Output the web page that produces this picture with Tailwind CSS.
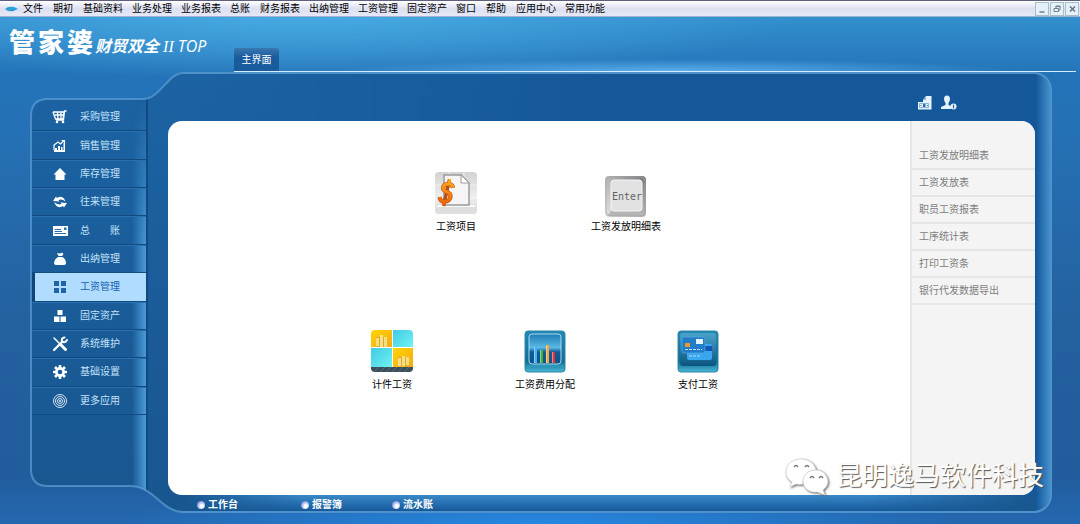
<!DOCTYPE html>
<html lang="zh-CN">

<head>
    <meta charset="UTF-8">
    <meta name="viewport" content="width=device-width, initial-scale=1.0">
    <title>管家婆财贸双全 II TOP</title>
    <script src="https://cdn.jsdelivr.net/npm/@tailwindcss/browser@4"></script>
</head>

<body class="min-h-screen flex flex-col relative font-['Liberation_Sans','Noto_Sans_CJK_SC',sans-serif] text-[10px] leading-4 bg-[radial-gradient(ellipse_420px_40px_at_50%_100%,#2688e2,transparent),radial-gradient(ellipse_500px_70px_at_28%_2%,#48abe4,transparent),linear-gradient(to_bottom,#3797d3_0px,#2d84c5_40px,#2473b8_75px,#2571b5_130px,#24619f_320px,#215c9c_90%,#2468b0_100%)]">

    <!-- menu bar -->
    <nav class="h-[17px] shrink-0 flex items-center border-t border-[#5d5f7c] border-b border-b-[#9fb5cf] bg-linear-to-b from-white via-[#dde0f1] to-[#e6e8f6] pl-[5px] text-black">
        <svg class="w-[13px] h-[6px] mr-[5px]" viewBox="0 0 13 6">
            <path d="M0 3Q3 0 9 1L13 3L8 5Q3 6 0 3Z" fill="#2a9fd8" />
            <path d="M3 4Q8 6 13 3L8 5Z" fill="#12568c" />
        </svg>
        <div class="flex gap-[9px] pt-px whitespace-nowrap">
            <button class="min-w-[21px] text-left">文件</button>
            <button class="min-w-[21px] text-left">期初</button>
            <button class="min-w-[21px] text-left">基础资料</button>
            <button class="min-w-[21px] text-left">业务处理</button>
            <button class="min-w-[21px] text-left">业务报表</button>
            <button class="min-w-[21px] text-left">总账</button>
            <button class="min-w-[21px] text-left">财务报表</button>
            <button class="min-w-[21px] text-left">出纳管理</button>
            <button class="min-w-[21px] text-left">工资管理</button>
            <button class="min-w-[21px] text-left">固定资产</button>
            <button class="min-w-[21px] text-left">窗口</button>
            <button class="min-w-[21px] text-left">帮助</button>
            <button class="min-w-[21px] text-left">应用中心</button>
            <button class="min-w-[21px] text-left">常用功能</button>
        </div>
        <div class="ml-auto flex gap-px pr-px">
            <button aria-label="最小化" class="w-[14px] h-[14px] border border-[#a9bdcb] bg-[#e4f1f8]">
                <svg class="w-3 h-3" viewBox="0 0 12 12" fill="none" stroke="#73808c" stroke-width="1.5"><path d="M3.500 9H8.500" /></svg>
            </button>
            <button aria-label="还原" class="w-[14px] h-[14px] border border-[#a9bdcb] bg-[#e4f1f8]">
                <svg class="w-3 h-3" viewBox="0 0 12 12" fill="none" stroke="#73808c"><path d="M5 5V3H9V7H8M4.500 3.500H9.500M3 5.500H7.500V8.500H3Z" /></svg>
            </button>
            <button aria-label="关闭" class="w-[14px] h-[14px] border border-[#a9bdcb] bg-[#e4f1f8]">
                <svg class="w-3 h-3" viewBox="0 0 12 12" fill="none" stroke="#687480" stroke-width="1.6"><path d="M4 3.5L9 8.5M9 3.5L4 8.5" /></svg>
            </button>
        </div>
    </nav>

    <!-- logo and page tab -->
    <header class="h-[55px] shrink-0 flex items-end pl-[9px] pr-1 text-white">
        <h1 class="flex items-baseline w-[225px] shrink-0 self-start pt-[10px] whitespace-nowrap leading-8">
            <span class="flex gap-[3px] text-[26px] font-black"><span>管</span><span>家</span><span>婆</span></span>
            <span class="text-[16px] font-bold italic ml-[2px]">财贸双全</span>
            <span class="text-[16px] italic ml-1 font-['Liberation_Serif',serif]">II</span>
            <span class="text-[16px] italic ml-1 font-['Open_Sans',sans-serif]">TOP</span>
        </h1>
        <div class="flex-1 self-stretch flex items-end border-b border-[#d5ecfb] bg-[radial-gradient(ellipse_340px_12px_at_52%_100%,#5aaeec,transparent)]">
            <button class="w-[45px] h-[23px] rounded-t-[2px] bg-linear-to-b from-[#3a78b1] to-[#195c9d] to-40%">主界面</button>
        </div>
    </header>

    <!-- framed work area -->
    <div class="relative flex-1 flex ml-[30px] mr-7 mb-[11px]">
        <svg class="absolute left-0 top-0 w-[153px] h-full" viewBox="0 0 153 441" preserveAspectRatio="none">
            <defs>
                <linearGradient id="panel" x1="0" y1="0" x2="0" y2="1">
                    <stop offset="0" stop-color="#1c63a3" />
                    <stop offset="1" stop-color="#18568f" />
                </linearGradient>
                <linearGradient id="glow">
                    <stop offset="0" stop-color="#4a9bd8" stop-opacity="0" />
                    <stop offset="1" stop-color="#4a9bd8" />
                </linearGradient>
                <linearGradient id="glowFade" x1="0" y1="0" x2="0" y2="1">
                    <stop offset="0" stop-color="#1b609f" />
                    <stop offset="1" stop-color="#1b609f" stop-opacity="0" />
                </linearGradient>
            </defs>
            <path d="M153 1C138 1 130 27 113 27H18Q1 27 1 44V397Q1 414 18 414H100C124 414 132 440 153 440Z" fill="url(#panel)" />
            <path d="M102 28H116V419Q110 415 102 414Z" fill="url(#glow)" />
            <path d="M102 28H116V180H102Z" fill="url(#glowFade)" />
            <path d="M117 27V419" stroke="#114a80" stroke-width="2" />
            <path d="M153 1C138 1 130 27 113 27H18Q1 27 1 44V397Q1 414 18 414H100C124 414 132 440 153 440" fill="none" stroke="#5a9bd2" stroke-opacity=".75" stroke-width="2" />
        </svg>
        <div class="absolute left-[153px] right-0 inset-y-0 rounded-r-[18px] border-2 border-l-0 border-[#4f92cb] bg-[linear-gradient(to_right,transparent_calc(100%_-_14px),#438fcb),linear-gradient(to_right,transparent,#14589a_50%),linear-gradient(to_bottom,#1c63a3,#18568f)]"></div>

        <aside class="relative w-[117px] shrink-0 pt-[31px] pl-[2px] pr-px">
            <ul class="grid h-[312px] auto-rows-fr text-[#c3e2fa]">
                <li class="border-b border-[#114b82]"><button class="w-full h-full flex items-center pl-[20px]">
                    <svg class="w-4 h-4 mr-3" viewBox="0 0 16 16" fill="none" stroke="#fff"><path d="M1 3H12L11 10H3.500L1 3M14.500 2H12.500L11.500 11H4M3 6H12M5.500 3L6 10M9 3V10" stroke-width="1.300" /><circle cx="5" cy="13" r="1.300" fill="#fff" stroke="none" /><circle cx="11" cy="13" r="1.300" fill="#fff" stroke="none" /></svg>采购管理</button></li>
                <li class="border-t border-t-[#2a6fae] border-b border-b-[#114b82]"><button class="w-full h-full flex items-center pl-[20px]">
                    <svg class="w-4 h-4 mr-3" viewBox="0 0 16 16" fill="#fff"><path d="M2 12H13V14H2ZM3 10H5V12H3ZM6 8H8V12H6ZM9 9H10.500V12H9ZM11.500 5H13V12H11.500Z" /><path d="M2 12V7L6 4L8.500 6L12 2.500M9.500 2.500H12.500V5" fill="none" stroke="#fff" stroke-width="1.200" /></svg>销售管理</button></li>
                <li class="border-t border-t-[#2a6fae] border-b border-b-[#114b82]"><button class="w-full h-full flex items-center pl-[20px]">
                    <svg class="w-4 h-4 mr-3" viewBox="0 0 16 16" fill="#fff"><path d="M8 2L14.500 8.500H12.500V14H3.500V8.500H1.500Z" /></svg>库存管理</button></li>
                <li class="border-t border-t-[#2a6fae] border-b border-b-[#114b82]"><button class="w-full h-full flex items-center pl-[20px]">
                    <svg class="w-4 h-4 mr-3" viewBox="0 0 16 16" fill="#fff"><path d="M1 7L4 2.500L5 4Q9 1.500 12 4.500L13.500 7.500Q10 4.500 6.500 6L7.500 7.500Z" /><path d="M15 9L12 13.500L11 12Q7 14.500 4 11.500L2 8Q6 11.500 9.500 10L8.500 8.500Z" /></svg>往来管理</button></li>
                <li class="border-t border-t-[#2a6fae] border-b border-b-[#114b82]"><button class="w-full h-full flex items-center pl-[20px]">
                    <svg class="w-4 h-4 mr-3" viewBox="0 0 16 16"><path d="M1 3H16V13H1Z" fill="#fff" /><path d="M2.500 6.500H9M2.500 8.500H10M2.500 10.500H14" stroke="#2e70aa" /><path d="M12 4.500H14.500V7H12Z" fill="#2e70aa" /></svg><span class="w-10 flex justify-between"><span>总</span><span>账</span></span></button></li>
                <li class="border-t border-t-[#2a6fae] border-b border-b-[#114b82]"><button class="w-full h-full flex items-center pl-[20px]">
                    <svg class="w-4 h-4 mr-3" viewBox="0 0 16 16" fill="#fff"><path d="M5 2Q8 3 10 1.500L11.500 3L10 5H6.500ZM6 6H10.500Q14 8 14 12Q14 14 12 14H4Q2 14 2 12Q2.500 8 6 6Z" /></svg>出纳管理</button></li>
                <li class="border-l-[3px] border-l-[#0e4479] border-b border-b-[#114b82]"><button aria-current="page" class="w-full h-full flex items-center pl-[17px] bg-[#b0dcff] text-[#1560ae]">
                    <svg class="w-4 h-4 mr-3" viewBox="0 0 16 16" fill="#1e64a6"><path d="M2 2H7V7H2ZM9 2H14V7H9ZM2 9H7V14H2ZM9 9H14V14H9Z" /></svg>工资管理</button></li>
                <li class="border-t border-t-[#2a6fae] border-b border-b-[#114b82]"><button class="w-full h-full flex items-center pl-[20px]">
                    <svg class="w-4 h-4 mr-3" viewBox="0 0 16 16" fill="#fff"><path d="M5.500 2H10.500V7H5.500ZM2 8.500H7.500V14H2ZM8.500 8.500H14V14H8.500Z" /></svg>固定资产</button></li>
                <li class="border-t border-t-[#2a6fae] border-b border-b-[#114b82]"><button class="w-full h-full flex items-center pl-[20px]">
                    <svg class="w-4 h-4 mr-3" viewBox="0 0 16 16" fill="none" stroke="#fff" stroke-linecap="round"><path d="M2 2L8 8" stroke-width="1.500" /><path d="M9 9L13.500 13.500" stroke-width="3" /><path d="M2 14L10.500 5.500" stroke-width="2.300" /><path d="M12.500 1.500Q9 2 10 5.500Q13 7.500 15 4" stroke-width="2" /></svg>系统维护</button></li>
                <li class="border-t border-t-[#2a6fae] border-b border-b-[#114b82]"><button class="w-full h-full flex items-center pl-[20px]">
                    <svg class="w-4 h-4 mr-3" viewBox="0 0 16 16" fill="none" stroke="#fff"><path d="M8 1V15M1 8H15M3 3L13 13M13 3L3 13" stroke-width="2.600" /><circle cx="8" cy="8" r="4.500" fill="#fff" /><circle cx="8" cy="8" r="2.300" fill="#1b5b99" stroke="none" /></svg>基础设置</button></li>
                <li class="border-t border-t-[#2a6fae] border-b border-b-[#114b82]"><button class="w-full h-full flex items-center pl-[20px]">
                    <svg class="w-4 h-4 mr-3" viewBox="0 0 16 16" fill="none" stroke="#d3e2ef"><circle cx="8" cy="8" r="6.500" /><circle cx="8" cy="8" r="4.500" /><circle cx="8" cy="8" r="2.500" /><circle cx="8" cy="8" r=".8" /></svg>更多应用</button></li>
            </ul>
        </aside>

        <main class="relative flex-1 flex flex-col pl-[21px] pr-[17px]">
            <div class="h-[49px] shrink-0 flex justify-end gap-[7px] pt-[22px] pr-[78px]">
                <button aria-label="凭证" class="w-4 h-[18px]">
                    <svg class="w-4 h-[18px]" viewBox="0 0 16 18"><path d="M6 6L9 2H14.500V8H6Z" fill="#e7f3fb" /><path d="M6 6H9V2Z" fill="#8cb6da" /><path d="M1 8H14.500V15.500H1Z" fill="#e7f3fb" /><path d="M2.500 9.500H11.500V13.500H2.500Z" fill="none" stroke="#6fa0cb" stroke-width=".8" /><path d="M6 10H8.500V13H6ZM3.500 11H4.500V12H3.500ZM10 11H11V12H10Z" fill="#2f70aa" /></svg>
                </button>
                <button aria-label="用户" class="w-[17px] h-[18px]">
                    <svg class="w-[17px] h-[18px]" viewBox="0 0 17 18" fill="#e7f3fb"><path d="M4 5Q4 1.500 7 1.500Q10 1.500 10 5Q10 7 8.500 9V11L11 12V15H1V13L5.500 11V9Q4 7 4 5Z" /><circle cx="13.500" cy="12.500" r="3" /><path d="M13.500 10.500V14.500" stroke="#2a69a5" stroke-width="1.200" /></svg>
                </button>
            </div>

            <div class="flex-1 flex rounded-[14px] bg-white overflow-hidden">
                <section class="flex-1 pt-[49px] text-black">
                    <div class="flex gap-[70px] pl-[238px]">
                        <button class="w-[100px] flex flex-col items-center gap-px">
                            <svg class="w-11 h-12" viewBox="0 0 44 48">
                                <defs>
                                    <linearGradient id="tile" x1="0" y1="0" x2="0" y2="1"><stop offset="0" stop-color="#d2d2d2" /><stop offset=".6" stop-color="#eee" /><stop offset="1" stop-color="#d9d9d9" /></linearGradient>
                                    <linearGradient id="orange" gradientUnits="userSpaceOnUse" x1="0" y1="8" x2="0" y2="36"><stop offset="0" stop-color="#ffb21c" /><stop offset="1" stop-color="#ee5c0c" /></linearGradient>
                                </defs>
                                <rect x="1" y="2" width="42" height="42" rx="4" fill="url(#tile)" />
                                <path d="M15 2V44M30 2V37M1 15H43M1 28H43" stroke="#fff" stroke-opacity=".6" />
                                <path d="M1 36L4 34H40L43 36V40Q43 44 39 44H5Q1 44 1 40Z" fill="#dedede" />
                                <path d="M4 35H40L42 37H2Z" fill="#fafafa" />
                                <path d="M10 5H27L35 13V35H10Z" fill="#f5f5f5" stroke="#9b9b9b" stroke-width="1.500" />
                                <path d="M27 5V13H35Z" fill="#fff" stroke="#9b9b9b" />
                                <g fill="none" stroke-linejoin="round">
                                    <path d="M19 18Q18.500 14 14.500 14Q9.500 14 9 17.500Q9 20.500 13 22Q17 23.500 16.500 27Q15.500 31.500 10.500 31.500Q6 31.500 5.500 27" stroke="#b9500f" stroke-width="4.200" />
                                    <path d="M15.500 9.500L9.500 36" stroke="#b9500f" stroke-width="3.400" />
                                    <path d="M19 18Q18.500 14 14.500 14Q9.500 14 9 17.500Q9 20.500 13 22Q17 23.500 16.500 27Q15.500 31.500 10.500 31.500Q6 31.500 5.500 27" stroke="url(#orange)" stroke-width="3" />
                                    <path d="M16 9L15 13.500M10.500 31L9 35.500" stroke="url(#orange)" stroke-width="2.600" />
                                </g>
                            </svg>
                            <span>工资项目</span>
                        </button>
                        <button class="w-[100px] flex flex-col items-center gap-px">
                            <svg class="w-11 h-12" viewBox="0 0 44 48">
                                <defs><linearGradient id="keycap" x1="0" y1="1" x2="1" y2="0"><stop offset="0" stop-color="#e3e3e3" /><stop offset=".5" stop-color="#b5b5b7" /><stop offset="1" stop-color="#77777c" /></linearGradient></defs>
                                <rect x="1" y="6" width="41" height="41" rx="4" fill="url(#keycap)" />
                                <path d="M4 45L9 39H36L41 45Q40 46 38 46H6Z" fill="#b4b4b6" />
                                <rect x="2" y="7" width="39" height="39" rx="4" fill="none" stroke="#a4a4a6" stroke-opacity=".7" />
                                <rect x="7" y="10" width="31" height="31" rx="3" fill="#e2e2e3" stroke="#f5f5f5" />
                                <text x="8" y="30" font-family="DejaVu Sans Mono, monospace" font-size="10" fill="#626262">Enter</text>
                            </svg>
                            <span>工资发放明细表</span>
                        </button>
                    </div>

                    <div class="flex gap-[53px] pl-[174px] pt-[93px]">
                        <button class="w-[100px] flex flex-col items-center gap-px">
                            <svg class="w-11 h-12" viewBox="0 0 44 48">
                                <defs>
                                    <linearGradient id="cyan" x1="0" y1="0" x2="1" y2="1"><stop offset="0" stop-color="#3fcbe2" /><stop offset="1" stop-color="#71f2f5" /></linearGradient>
                                    <linearGradient id="gold" x1="0" y1="0" x2="1" y2="1"><stop offset="0" stop-color="#ffd500" /><stop offset="1" stop-color="#f5a817" /></linearGradient>
                                </defs>
                                <path d="M1 36H43V40Q43 44 39 44H5Q1 44 1 40Z" fill="#3b4e5b" />
                                <path d="M4 44L9 39M10 44L15 39M16 44L21 39M22 44L27 39M28 44L33 39M34 44L39 39" stroke="#596d79" />
                                <path d="M1 6Q1 2 5 2H22V20H1Z" fill="url(#gold)" />
                                <path d="M23 2H39Q43 2 43 6V19H23Z" fill="url(#cyan)" />
                                <path d="M1 20H22V39H1Z" fill="url(#cyan)" />
                                <path d="M23 20H43V39H23Z" fill="url(#gold)" />
                                <path d="M22.500 2V39M1 19.500H43" stroke="#fff" />
                                <path d="M6 9H17V19H6ZM28 29H39V38H28Z" fill="#dca92c" />
                                <path d="M6 11H9M6 13H9M6 15H9M6 17H9M10 8H13M10 10H13M10 12H13M10 14H13M10 16H13M10 18H13M14 10H17M14 12H17M14 14H17M14 16H17M14 18H17M28 31H31M28 33H31M28 35H31M28 37H31M32 29H35M32 31H35M32 33H35M32 35H35M32 37H35M36 30H39M36 32H39M36 34H39M36 36H39" stroke="#fcf0a4" stroke-width="1.300" />
                            </svg>
                            <span>计件工资</span>
                        </button>
                        <button class="w-[100px] flex flex-col items-center gap-px">
                            <svg class="w-11 h-12" viewBox="0 0 44 48">
                                <defs>
                                    <linearGradient id="teal" x1="0" y1="0" x2="0" y2="1"><stop offset="0" stop-color="#2388b6" /><stop offset=".75" stop-color="#126b94" /><stop offset="1" stop-color="#48b8d5" /></linearGradient>
                                    <linearGradient id="screen" x1="0" y1="0" x2="0" y2="1"><stop offset="0" stop-color="#1c7bb4" /><stop offset=".45" stop-color="#5bb9e4" /><stop offset=".6" stop-color="#115a97" /><stop offset="1" stop-color="#0d5685" /></linearGradient>
                                </defs>
                                <rect x="2" y="3" width="40" height="41" rx="3" fill="url(#teal)" stroke="#2f86a8" />
                                <path d="M3 38H41" stroke="#2aa5c4" />
                                <rect x="6" y="6" width="32" height="30" rx="3" fill="url(#screen)" stroke="#a9dcf2" />
                                <path d="M11 19H14V35H11Z" fill="#3fb2fa" />
                                <path d="M17 22H20V35H17Z" fill="#41ae3d" />
                                <path d="M23 17H26V35H23Z" fill="#f4a83d" />
                                <path d="M29 24H32V35H29Z" fill="#e3323e" />
                                <path d="M11.500 19V35M17.500 22V35M23.500 17V35M29.500 24V35" stroke="#fff" stroke-opacity=".4" />
                            </svg>
                            <span>工资费用分配</span>
                        </button>
                        <button class="w-[100px] flex flex-col items-center gap-px">
                            <svg class="w-11 h-12" viewBox="0 0 44 48">
                                <defs><linearGradient id="cardBase" x1="0" y1="0" x2="0" y2="1"><stop offset="0" stop-color="#4aa3c8" /><stop offset="1" stop-color="#0b5580" /></linearGradient></defs>
                                <rect x="2" y="3" width="40" height="41" rx="3" fill="url(#teal)" stroke="#2f86a8" />
                                <rect x="4" y="5" width="36" height="33" rx="3" fill="url(#cardBase)" />
                                <rect x="11" y="16" width="25" height="16" rx="2" fill="#39a6ef" />
                                <path d="M29 18H36V23H29Z" fill="#1456b8" />
                                <rect x="6" y="9" width="23" height="16" rx="2" fill="#237cc8" stroke="#5ab2e8" stroke-width=".6" />
                                <path d="M20 11H27V16H20Z" fill="#e3f3ff" />
                                <path d="M9 15H14V19H9Z" fill="#eb9a31" />
                                <path d="M9 21.500H26M13 28H24" stroke="#b3def5" stroke-dasharray="3 1" />
                            </svg>
                            <span>支付工资</span>
                        </button>
                    </div>
                </section>

                <!-- report links -->
                <aside class="w-[125px] shrink-0 border-l-2 border-[#e6e6e6] bg-[#f4f4f4] pt-[22px] text-[#7d7d7d]">
                    <a href="#" class="flex items-center h-[27px] pl-[7px] border-b-2 border-[#e6e6e6]">工资发放明细表</a>
                    <a href="#" class="flex items-center h-[27px] pl-[7px] border-b-2 border-[#e6e6e6]">工资发放表</a>
                    <a href="#" class="flex items-center h-[27px] pl-[7px] border-b-2 border-[#e6e6e6]">职员工资报表</a>
                    <a href="#" class="flex items-center h-[27px] pl-[7px] border-b-2 border-[#e6e6e6]">工序统计表</a>
                    <a href="#" class="flex items-center h-[27px] pl-[7px] border-b-2 border-[#e6e6e6]">打印工资条</a>
                    <a href="#" class="flex items-center h-[27px] pl-[7px] border-b-2 border-[#e6e6e6]">银行代发数据导出</a>
                </aside>
            </div>

            <!-- bottom shortcuts -->
            <div class="h-[18px] shrink-0 pb-[2px]">
                <div class="h-4 ml-[15px] flex items-start pt-[2px] pl-[14px] bg-[linear-gradient(to_right,#18578f,transparent_120px,transparent_80%,#18578f),linear-gradient(to_bottom,#3a88c9,#15599a)] text-white font-bold">
                    <button class="flex items-center gap-[3px] mr-[63px]"><span class="w-2 h-2 rounded-full bg-radial-[at_60%_65%] from-white from-20% to-[#3155cf]"></span>工作台</button>
                    <button class="flex items-center gap-[3px] mr-[50px]"><span class="w-2 h-2 rounded-full bg-radial-[at_60%_65%] from-white from-20% to-[#3155cf]"></span>报警簿</button>
                    <button class="flex items-center gap-[3px]"><span class="w-2 h-2 rounded-full bg-radial-[at_60%_65%] from-white from-20% to-[#3155cf]"></span>流水账</button>
                </div>
            </div>
        </main>
    </div>

    <!-- watermark -->
    <div class="absolute right-9 bottom-7 flex items-center gap-[7px] text-[26px] leading-10 text-white [text-shadow:1px_1px_1px_#555]">
        <svg class="w-11 h-10 drop-shadow-[1px_1px_1px_#666]" viewBox="0 0 44 40" fill="#fff" stroke="#ccc" stroke-width=".6">
            <path d="M16 3C7 3 1 9 1 16C1 21 4 24 7 26L5 31L11 28Q15 29 18 28C17 20 23 14 31 14C30 8 24 3 16 3Z" />
            <path d="M31 14C23 14 18 19 18 25C18 32 24 37 32 36L40 39L38 34C42 31 43 28 43 25C42 19 38 14 31 14Z" />
            <path d="M9 11Q11 8 13 11M20 11Q22 8 24 11M25 22Q27 19 29 22M34 22Q36 19 38 22" fill="none" stroke="#777" stroke-width="1.500" />
        </svg>
        <span>昆明逸马软件科技</span>
    </div>
</body>

</html>
